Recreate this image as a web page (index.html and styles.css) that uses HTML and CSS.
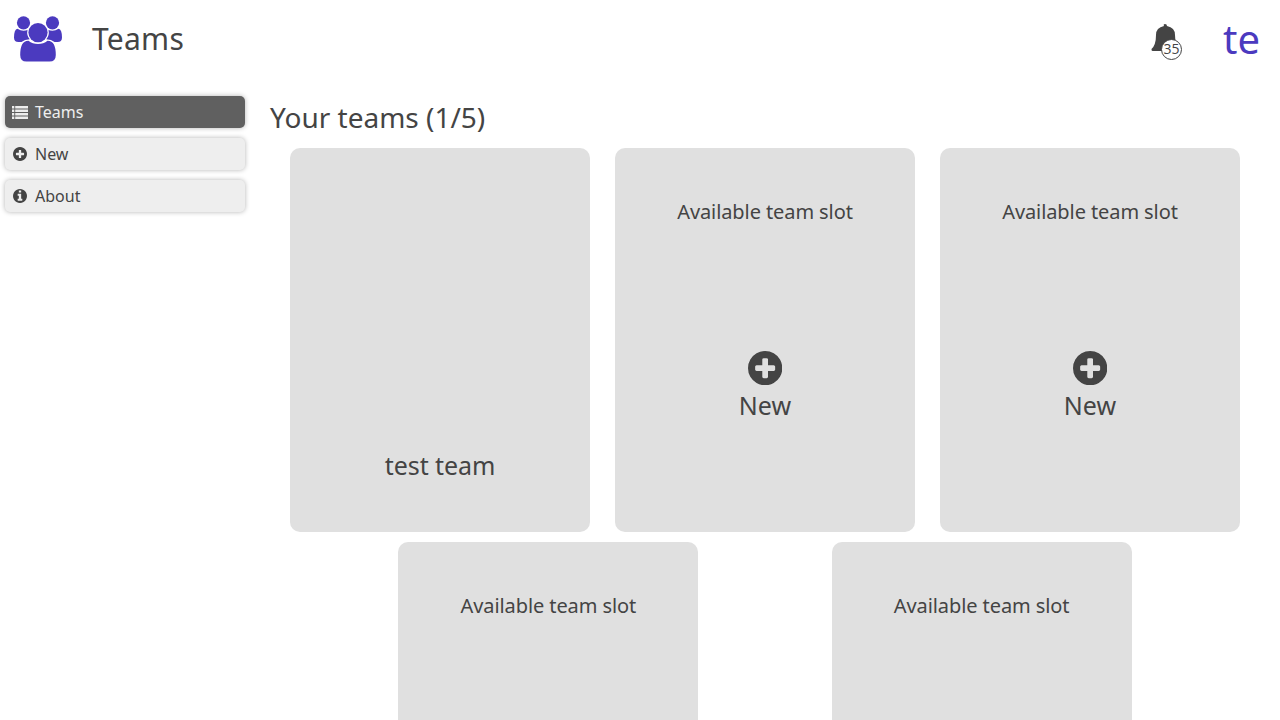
FILE: index.html
```html
<!DOCTYPE html>
<html lang="en">
<head>
<meta charset="utf-8">
<title>Teams</title>
<link rel="stylesheet" href="styles.css">
</head>
<body>
<svg class="defs" width="0" height="0" aria-hidden="true">
  <symbol id="plus-circle" viewBox="0 0 1536 1536"><path d="M1216 832V704q0-26-19-45t-45-19H896V384q0-26-19-45t-45-19H704q-26 0-45 19t-19 45v256H384q-26 0-45 19t-19 45v128q0 26 19 45t45 19h256v256q0 26 19 45t45 19h128q26 0 45-19t19-45V896h256q26 0 45-19t19-45zm320-64q0 209-103 385.500T1153.500 1433 768 1536t-385.500-103T103 1153.500 0 768t103-385.500T382.500 103 768 0t385.500 103T1433 382.500 1536 768z"/></symbol>
</svg>
<header class="topbar">
  <svg class="logo" viewBox="0 0 50 48">
    <circle cx="10.500" cy="7.800" r="6.600"/><circle cx="39.500" cy="7.800" r="6.600"/>
    <path d="M4.500 13.700Q7.500 15.700 10.500 15.700Q12.800 15.700 14.500 15.100Q13.300 20.500 16.700 24.200Q11.500 24.400 8.500 27H5.500Q1 27 1 22.500Q1 14.500 4.500 13.700ZM45.500 13.700Q42.500 15.700 39.500 15.700Q37.200 15.700 35.500 15.100Q36.700 20.500 33.300 24.200Q38.500 24.400 41.500 27H44.500Q49 27 49 22.500Q49 14.500 45.500 13.700Z"/>
    <circle cx="25" cy="17.600" r="9.600"/>
    <path d="M15.500 25.700Q19.500 28.900 25 28.900T34.500 25.700Q42.800 25.500 42.800 40Q42.800 46.600 36.500 46.600H13.500Q7.200 46.600 7.200 40Q7.200 25.500 15.500 25.700Z"/>
  </svg>
  <h1 class="page-title">Teams</h1>
  <div class="bell">
    <svg class="bell-icon" viewBox="0 0 28 30"><path d="M14 0Q16 0 16 2Q24 3.500 24 11Q24 19 28 23Q28 27 25 27H1.500Q.3 27 .5 25Q5 21 5 11Q5 3.500 13 2Q12 0 14 0Z"/></svg>
    <span class="badge">35</span>
  </div>
  <div class="user">te</div>
</header>
<div class="layout">
  <nav class="menu">
    <a class="item active"><svg class="icon list" viewBox="0 0 16 13"><path d="M0 0h2.300v2.400H0zM3.200 0H16v2.400H3.200zM0 3.500h2.300v2.400H0zM3.200 3.500H16v2.400H3.200zM0 7h2.300v2.400H0zM3.200 7H16v2.400H3.200zM0 10.500h2.300V13H0zM3.200 10.500H16V13H3.200z"/></svg><span>Teams</span></a>
    <a class="item"><svg class="icon"><use href="#plus-circle"/></svg><span>New</span></a>
    <a class="item"><svg class="icon" viewBox="0 0 1536 1536"><path d="M1024 1248v-160q0-14-9-23t-23-9h-96V544q0-14-9-23t-23-9H544q-14 0-23 9t-9 23v160q0 14 9 23t23 9h96v320h-96q-14 0-23 9t-9 23v160q0 14 9 23t23 9h448q14 0 23-9t9-23zM896 352V192q0-14-9-23t-23-9H672q-14 0-23 9t-9 23v160q0 14 9 23t23 9h192q14 0 23-9t9-23zm640 416q0 209-103 385.500T1153.500 1433 768 1536t-385.500-103T103 1153.500 0 768t103-385.500T382.500 103 768 0t385.500 103T1433 382.500 1536 768z"/></svg><span>About</span></a>
  </nav>
  <main class="content">
    <h2 class="heading">Your teams (1/5)</h2>
    <div class="cards">
      <div class="card"><div class="team-name">test team</div></div>
      <div class="card"><div class="slot">Available team slot</div><svg class="plus"><use href="#plus-circle"/></svg><div class="new">New</div></div>
      <div class="card"><div class="slot">Available team slot</div><svg class="plus"><use href="#plus-circle"/></svg><div class="new">New</div></div>
      <div class="card"><div class="slot">Available team slot</div></div>
      <div class="card"><div class="slot">Available team slot</div></div>
    </div>
  </main>
</div>
</body>
</html>
```
FILE: styles.css
```css
* { box-sizing: border-box; }
body { margin: 0; height: 720px; overflow: hidden; background: #fff; color: #444; font: 16px/24px "Noto Sans", "Open Sans", sans-serif; }
svg { display: block; fill: currentColor; }
.defs { position: absolute; }
h1, h2 { margin: 0; font-weight: 400; }
.topbar { display: flex; align-items: center; height: 80px; padding: 0 20px 2px 13px; }
.logo { width: 50px; height: 48px; color: #4b3abf; }
.page-title { margin-left: 29px; font-size: 30px; line-height: 40px; letter-spacing: .25px; }
.bell { position: relative; width: 28px; height: 30px; margin: 0 44px 0 auto; }
.bell-icon { width: 28px; height: 30px; }
.badge { position: absolute; left: 10px; top: 15px; width: 21px; height: 21px; border: 1px solid #444; border-radius: 50%; background: #fff; font-family: "Open Sans", "Noto Sans", sans-serif; font-size: 14px; line-height: 17px; text-align: center; }
.user { color: #4b3abf; font-size: 40px; line-height: 54px; }
.layout { display: flex; align-items: flex-start; }
.menu { display: flex; flex-direction: column; gap: 10px; width: 250px; padding: 16px 5px; }
.item { display: flex; align-items: center; gap: 8px; height: 32px; padding-left: 8px; border-radius: 5px; background: #eee; box-shadow: 0 0 5px rgba(0,0,0,.3); }
.active { background: #606060; color: #eee; gap: 7px; padding-left: 7px; }
.icon { width: 14px; height: 14px; }
.list { width: 16px; height: 13px; }
.content { width: 1030px; padding: 17px 20px 0; }
.heading { font-size: 28px; line-height: 40px; height: 46px; }
.cards { display: flex; flex-wrap: wrap; justify-content: space-evenly; }
.card { display: flex; flex-direction: column; align-items: center; width: 300px; height: 384px; margin: 5px; border-radius: 10px; background: #e0e0e0; }
.slot { margin-top: 49px; font-size: 20px; line-height: 30px; letter-spacing: -.09px; }
.plus { width: 34.300px; height: 34.300px; margin-top: 123.500px; }
.new { margin-top: 1.200px; font-size: 25px; line-height: 38px; }
.team-name { margin-top: 298px; font-size: 25px; line-height: 38px; letter-spacing: -.09px; }
```
